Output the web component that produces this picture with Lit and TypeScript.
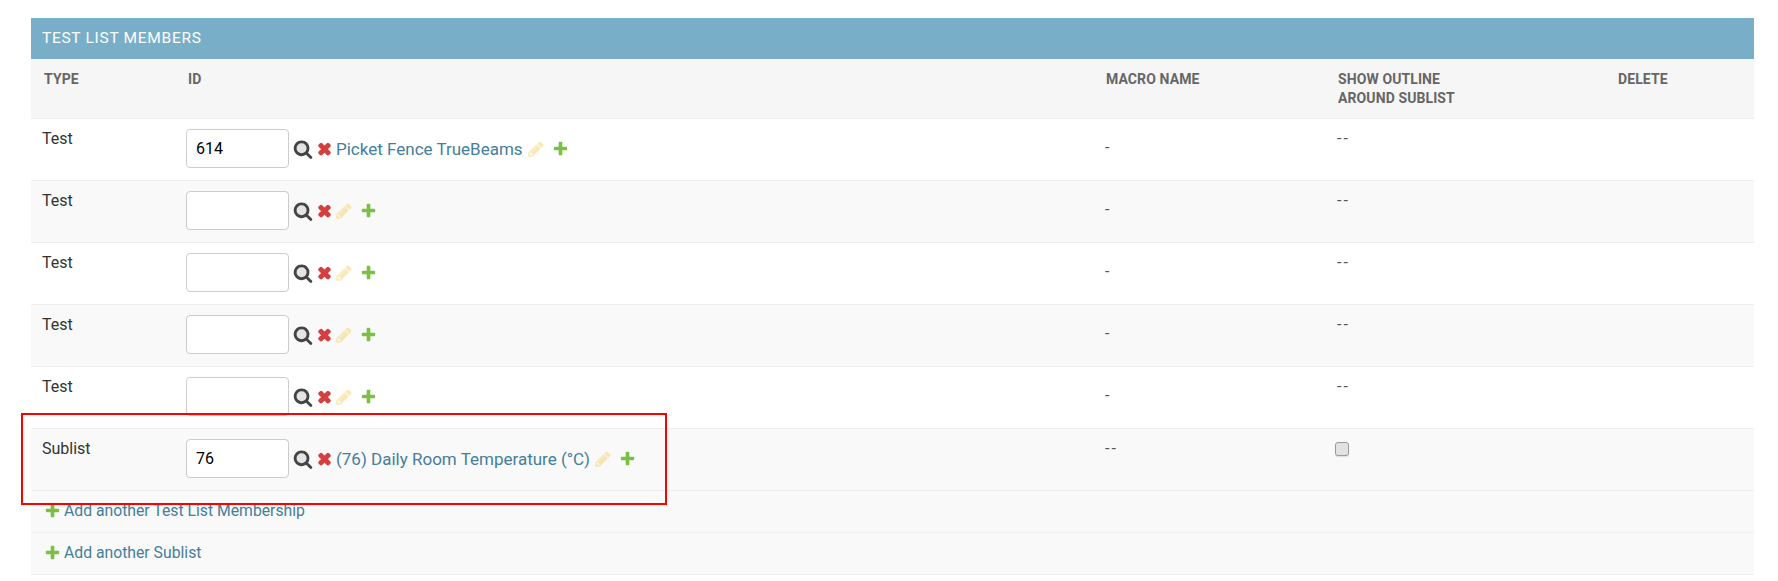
import { LitElement, html, css, svg } from "lit";
import { customElement } from "lit/decorators.js";

const searchIcon = svg`<circle class="lens" cx="768" cy="832" r="470"/><path d="M1216 832q0-185-131.500-316.500t-316.500-131.500-316.500 131.500-131.500 316.500 131.500 316.500 316.500 131.500 316.500-131.500 131.500-316.500zm512 832q0 52-38 90t-90 38q-54 0-90-38l-343-342q-179 124-399 124-143 0-273.500-55.500t-225-150-150-225-55.500-273.500 55.500-273.500 150-225 225-150 273.500-55.500 273.500 55.500 225 150 150 225 55.500 273.500q0 220-124 399l343 343q37 37 37 90z"/>`;
const delIcon = svg`<path d="M1490 1322q0 40-28 68l-136 136q-28 28-68 28t-68-28l-294-294-294 294q-28 28-68 28t-68-28l-136-136q-28-28-28-68t28-68l294-294-294-294q-28-28-28-68t28-68l136-136q28-28 68-28t68 28l294 294 294-294q28-28 68-28t68 28l136 136q28 28 28 68t-28 68l-294 294 294 294q28 28 28 68z"/>`;
const penIcon = svg`<path d="M491 1536l91-91-235-235-91 91v107h128v128h107zm523-928q0-22-22-22-10 0-17 7l-542 542q-7 7-7 17 0 22 22 22 10 0 17-7l542-542q7-7 7-17zm-54-192l416 416-832 832h-416v-416zm683 96q0 53-37 90l-166 166-416-416 166-165q36-38 90-38 53 0 91 38l235 234q37 39 37 91z"/>`;
const addIcon = svg`<path d="M1600 796v192q0 40-28 68t-68 28h-416v416q0 40-28 68t-68 28h-192q-40 0-68-28t-28-68v-416h-416q-40 0-68-28t-28-68v-192q0-40 28-68t68-28h416v-416q0-40 28-68t68-28h192q40 0 68 28t28 68v416h416q40 0 68 28t28 68z"/>`;

const icon = (cls: string, body: unknown) =>
  html`<svg class="ico ${cls}" viewBox="0 0 1792 1792">${body}</svg>`;

interface Row {
  type: string;
  id: string;
  label: string;
  macro: string;
  outline: boolean;
}

const rows: Row[] = [
  { type: "Test", id: "614", label: "Picket Fence TrueBeams", macro: "-", outline: false },
  { type: "Test", id: "", label: "", macro: "-", outline: false },
  { type: "Test", id: "", label: "", macro: "-", outline: false },
  { type: "Test", id: "", label: "", macro: "-", outline: false },
  { type: "Test", id: "", label: "", macro: "-", outline: false },
  { type: "Sublist", id: "76", label: "(76) Daily Room Temperature (°C)", macro: "--", outline: true },
];

@customElement("app-root")
export class AppRoot extends LitElement {
  static styles = css`
    :host {
      display: block;
      position: relative;
      height: 581px;
      background: #fff;
      font-family: Roboto, "Liberation Sans", sans-serif;
      color: #333;
      overflow: hidden;
    }
    .module {
      margin: 18px 24px 0 31px;
    }
    .caption {
      background: #79aec8;
      color: #fff;
      height: 41px;
      line-height: 41px;
      padding-left: 11px;
      font-size: 15.5px;
      letter-spacing: 0.7px;
      font-weight: 400;
    }
    table {
      width: 100%;
      border-collapse: separate;
      border-spacing: 0;
      table-layout: fixed;
    }
    th {
      background: #f6f6f6;
      color: #666;
      font-size: 14px;
      font-weight: 700;
      line-height: 19px;
      letter-spacing: 0.1px;
      text-align: left;
      vertical-align: top;
      padding: 11px 12px 0 12px;
      border-bottom: 1px solid #eee;
      height: 60px;
      box-sizing: border-box;
    }
    th.first {
      padding-left: 13px;
    }
    td {
      height: 62px;
      box-sizing: border-box;
      vertical-align: top;
      font-size: 16px;
      line-height: 20px;
      padding: 10px 11px;
      border-bottom: 1px solid #eee;
      background: #fff;
    }
    tr:nth-child(even) td {
      background: #f9f9f9;
    }
    td.mid {
      padding-top: 19px;
      color: #555;
    }
    td.dash {
      padding-top: 10px;
      color: #555;
      letter-spacing: 2px;
    }
    .idcell {
      display: flex;
      align-items: center;
    }
    .idinput {
      width: 103px;
      height: 39px;
      box-sizing: border-box;
      border: 1px solid #ccc;
      border-radius: 4px;
      padding: 0 9px;
      font-family: inherit;
      font-size: 16px;
      color: #000;
      background: #fff;
      outline: none;
    }
    .ico {
      flex: none;
      display: block;
    }
    .search {
      width: 20px;
      height: 20px;
      fill: #444;
      margin-left: 4px;
    }
    .lens {
      fill: #e4e4e4;
    }
    .del {
      width: 17px;
      height: 17px;
      fill: #d43f3f;
      stroke: #d43f3f;
      stroke-width: 140;
      margin-left: 3px;
    }
    .pen {
      width: 18px;
      height: 18px;
      fill: #efb80b;
      opacity: 0.3;
      margin-left: 2px;
    }
    .add {
      width: 17px;
      height: 17px;
      fill: #7ac143;
      margin-left: 7px;
    }
    .link {
      color: #447e9b;
      font-size: 17px;
      text-decoration: none;
      margin-left: 3px;
      white-space: nowrap;
    }
    .linkpen {
      margin-left: 4px;
    }
    .check {
      appearance: none;
      width: 14px;
      height: 14px;
      margin: 3px 0 0 -2px;
      display: block;
      box-sizing: border-box;
      background: #e2e2e2;
      border: 1.5px solid #9a9a9a;
      border-radius: 3px;
      box-shadow: 0 1px 1px #ddd;
    }
    .addrow {
      background: #f9f9f9;
      border-bottom: 1px solid #eee;
      display: flex;
      align-items: center;
      padding: 0 0 2px 13px;
      box-sizing: border-box;
      height: 42px;
    }
    .addrow .add {
      margin-left: 0;
    }
    .addrow .link {
      font-size: 15.75px;
      margin-left: 3px;
    }
    .mark {
      position: absolute;
      left: 21px;
      top: 413px;
      width: 646px;
      height: 92px;
      box-sizing: border-box;
      border: 2px solid #f00;
      pointer-events: none;
    }
  `;

  render() {
    return html`
      <div class="module">
        <div class="caption">TEST LIST MEMBERS</div>
        <table>
          <colgroup>
            <col style="width:144px" />
            <col style="width:919px" />
            <col style="width:232px" />
            <col style="width:280px" />
            <col />
          </colgroup>
          <thead>
            <tr>
              <th class="first">TYPE</th>
              <th class="first">ID</th>
              <th>MACRO NAME</th>
              <th>SHOW OUTLINE<br />AROUND SUBLIST</th>
              <th>DELETE</th>
            </tr>
          </thead>
          <tbody>
            ${rows.map(
              (r) => html`<tr>
                <td>${r.type}</td>
                <td>
                  <div class="idcell">
                    <input class="idinput" type="text" .value=${r.id} />
                    ${icon("search", searchIcon)} ${icon("del", delIcon)}
                    ${r.label ? html`<a class="link">${r.label}</a>` : ""}
                    ${icon(r.label ? "pen linkpen" : "pen", penIcon)}
                    ${icon("add", addIcon)}
                  </div>
                </td>
                <td class=${r.macro === "-" ? "mid" : "dash"}>${r.macro}</td>
                <td class="dash">
                  ${r.outline
                    ? html`<input class="check" type="checkbox" disabled />`
                    : "--"}
                </td>
                <td></td>
              </tr>`
            )}
          </tbody>
        </table>
        <div class="addrow">
          ${icon("add", addIcon)}<a class="link">Add another Test List Membership</a>
        </div>
        <div class="addrow">
          ${icon("add", addIcon)}<a class="link">Add another Sublist</a>
        </div>
      </div>
      <div class="mark"></div>
    `;
  }
}
